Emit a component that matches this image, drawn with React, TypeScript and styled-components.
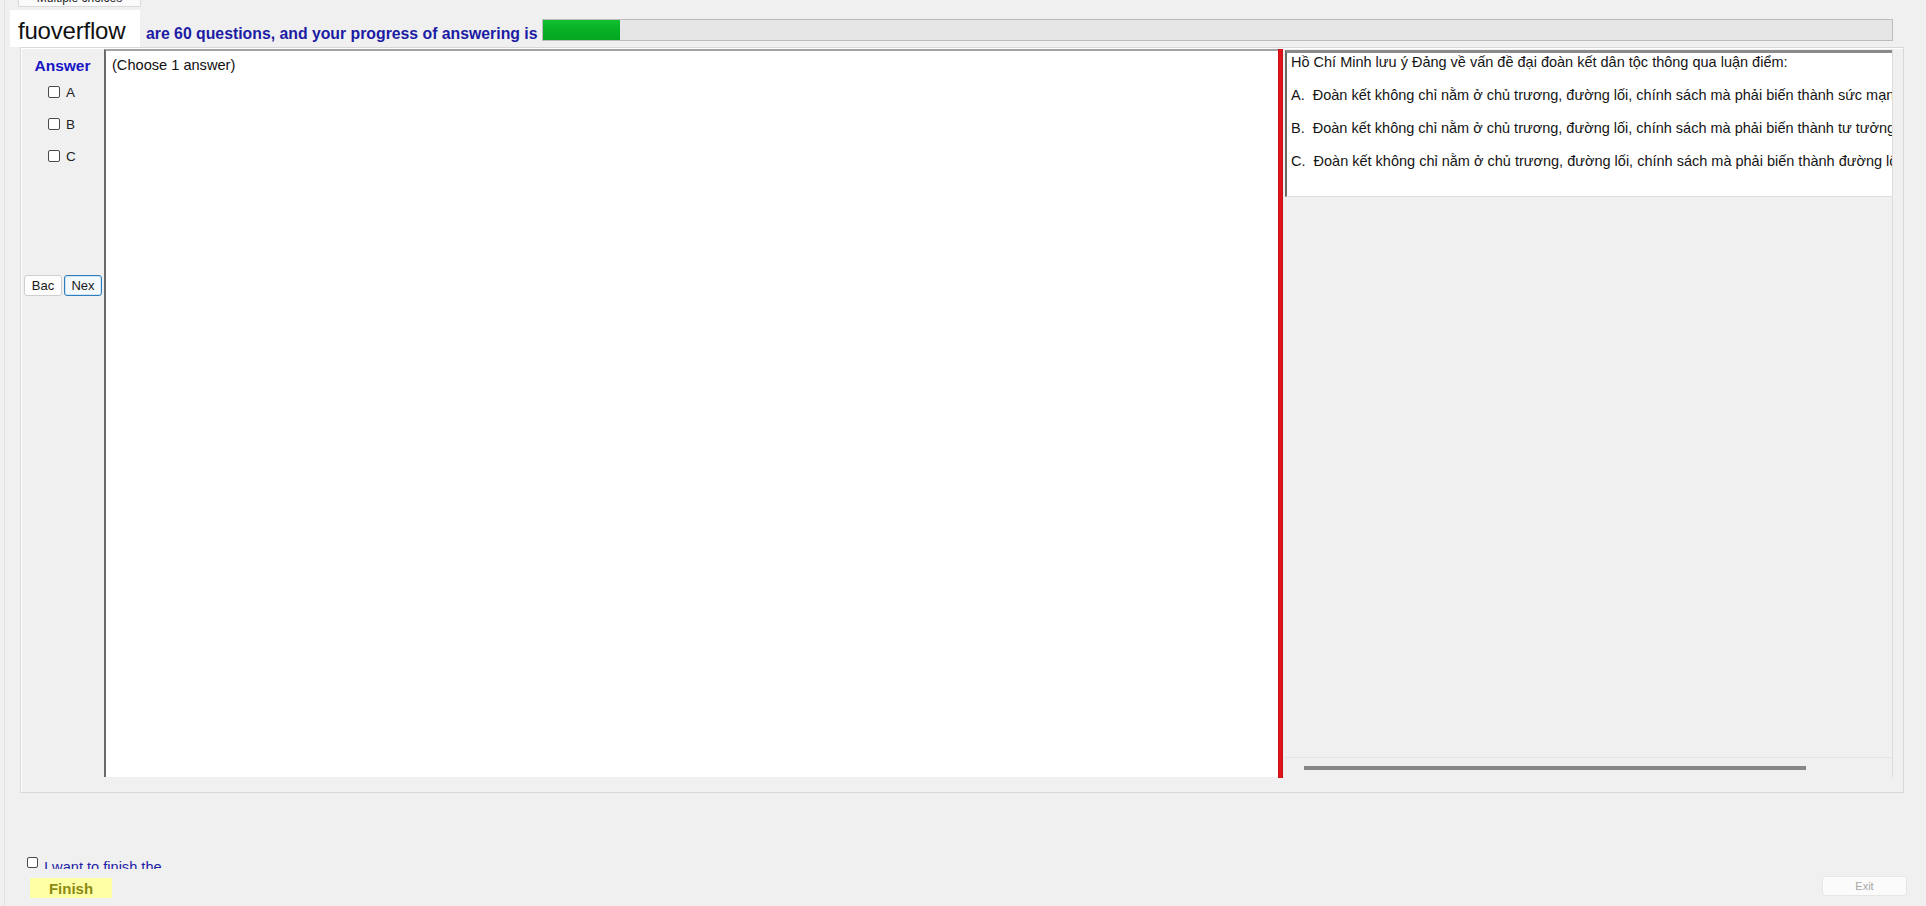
import React from 'react';
import styled, { createGlobalStyle } from 'styled-components';

const GlobalStyle = createGlobalStyle`
  html, body {
    margin: 0;
    padding: 0;
    background: #f0f0f0;
  }
  body {
    font-family: "Liberation Sans", Arial, sans-serif;
    color: #1e1e1e;
  }
`;

const Window = styled.div`
  width: 1926px;
  height: 906px;
  overflow: hidden;
  background: #f0f0f0;
  display: flex;
  flex-direction: column;
  box-shadow: inset 4px 0 0 #f0f0f0, inset 5px 0 0 #e2e2e2;
`;

const TabStrip = styled.div`
  height: 8px;
  display: flex;
`;

const Tab = styled.div`
  margin-left: 18px;
  width: 121px;
  height: 6px;
  overflow: hidden;
  background: #fbfbfb;
  border: 1px solid #dadada;
  border-top: none;
  font-size: 12px;
  line-height: 14px;
  text-align: center;
  color: #222;

  span {
    display: block;
    margin-top: -9px;
  }
`;

const Header = styled.div`
  height: 39px;
  display: flex;
  align-items: flex-start;
`;

const Brand = styled.div`
  margin: 2px 0 0 10px;
  width: 122px;
  height: 30px;
  padding: 7px 0 0 8px;
  background: #ffffff;
  font-size: 24px;
  line-height: 27px;
  color: #111;
  letter-spacing: -0.2px;
`;

const HeaderText = styled.div`
  margin: 17px 0 0 6px;
  font-size: 15.8px;
  line-height: 18px;
  font-weight: bold;
  color: #1c1ca4;
  white-space: nowrap;
`;

const Progress = styled.div`
  flex: 1;
  margin: 11px 33px 0 4px;
  height: 20px;
  background: #e6e6e6;
  border: 1px solid #bcbcbc;
  display: flex;
`;

const ProgressFill = styled.div`
  height: 100%;
  background: linear-gradient(#11c030, #06b025 50%, #05a722);
`;

const GroupBox = styled.div`
  margin-left: 20px;
  width: 1882px;
  height: 743px;
  border: 1px solid #d8d8d8;
  box-shadow: inset 1px 1px 0 #ffffff;
  display: flex;
  align-items: flex-start;
  padding-top: 1px;
  box-sizing: content-box;
`;

const AnswerColumn = styled.div`
  width: 83px;
  height: 728px;
  display: flex;
  flex-direction: column;
`;

const AnswerTitle = styled.div`
  margin-top: 8px;
  text-align: center;
  font-size: 15.5px;
  line-height: 18px;
  font-weight: bold;
  color: #1616c4;
`;

const OptionRow = styled.label<{ $first?: boolean }>`
  display: flex;
  align-items: center;
  height: 32px;
  margin-top: ${p => (p.$first ? '1px' : '0')};
  padding-left: 27px;
  font-size: 13.5px;
  color: #222;
`;

const CheckBox = styled.span<{ $size?: number }>`
  width: ${p => p.$size ?? 10}px;
  height: ${p => p.$size ?? 10}px;
  border: 1px solid #4a4a4a;
  border-radius: 2px;
  background: #ffffff;
  margin-right: 6px;
  flex: none;
`;

const NavRow = styled.div`
  margin-top: 103px;
  padding-left: 3px;
  display: flex;
  gap: 2px;
`;

const NavButton = styled.button<{ $focused?: boolean }>`
  width: 38px;
  height: 21px;
  padding: 0;
  font-family: "Liberation Sans", Arial, sans-serif;
  font-size: 13px;
  color: #1a1a1a;
  border-radius: 3px;
  border: 1px solid ${p => (p.$focused ? '#2f7fbe' : '#cfcfcf')};
  background: ${p => (p.$focused ? '#f4f9fd' : '#fdfdfd')};
  box-shadow: ${p => (p.$focused ? 'inset 0 0 0 1px #cfe3f3' : 'none')};
`;

const ChoiceBox = styled.div`
  width: 1174px;
  height: 728px;
  background: #ffffff;
  border-top: 2px solid #a3a3a3;
  border-left: 2px solid #6a6a6a;
  padding: 6px 0 0 6px;
  box-sizing: border-box;
  font-size: 14.6px;
  line-height: 17px;
  color: #111;
`;

const Divider = styled.div`
  width: 5px;
  height: 729px;
  background: linear-gradient(90deg, #b80f14, #e2141b 30%, #e2141b 70%, #b80f14);
`;

const QuestionPanel = styled.div`
  margin-left: 2px;
  width: 607px;
  height: 728px;
  border-right: 1px solid #dcdcdc;
  display: flex;
  flex-direction: column;
`;

const QuestionBox = styled.div`
  margin-top: 1px;
  height: 147px;
  background: #ffffff;
  border-top: 3px solid #8a8a8a;
  border-left: 2px solid #6a6a6a;
  border-bottom: 1px solid #dedede;
  box-sizing: border-box;
  padding: 1px 0 0 4px;
  overflow: hidden;
`;

const QuestionLine = styled.p`
  margin: 0 0 16px;
  font-size: 14.5px;
  line-height: 17px;
  color: #151515;
  white-space: pre;
`;

const PanelFill = styled.div`
  flex: 1;
  background: #f0f0f0;
`;

const ScrollStrip = styled.div`
  height: 19px;
  border-top: 1px solid #e4e4e4;
  display: flex;
  align-items: flex-start;
  padding-left: 19px;
`;

const ScrollThumb = styled.div`
  margin-top: 8px;
  width: 502px;
  height: 4px;
  background: #868686;
`;

const ConfirmRow = styled.label`
  margin: 64px 0 0 27px;
  height: 12px;
  overflow: hidden;
  display: flex;
  align-items: flex-start;
  font-size: 14.6px;
  line-height: 16px;
  color: #1c1ca4;
`;

const ConfirmText = styled.span`
  margin-top: 2px;
  width: 121px;
  overflow: hidden;
  white-space: nowrap;
`;

const ActionRow = styled.div`
  margin-top: 7px;
  display: flex;
  align-items: flex-start;
  justify-content: space-between;
  padding: 0 19px 0 30px;
`;

const FinishButton = styled.button`
  margin-top: 2px;
  width: 82px;
  height: 20px;
  padding: 0;
  border: none;
  background: #ffffa6;
  font-family: "Liberation Sans", Arial, sans-serif;
  font-size: 15px;
  font-weight: bold;
  color: #8a8a14;
`;

const ExitButton = styled.button`
  width: 85px;
  height: 20px;
  padding: 0;
  border: 1px solid #e6e6e6;
  border-radius: 3px;
  background: #fbfbfb;
  font-family: "Liberation Sans", Arial, sans-serif;
  font-size: 11px;
  color: #a6a6a6;
`;

const questionLines = [
  'Hồ Chí Minh lưu ý Đảng về vấn đề đại đoàn kết dân tộc thông qua luận điểm:',
  'A.  Đoàn kết không chỉ nằm ở chủ trương, đường lối, chính sách mà phải biến thành sức mạnh vật chất',
  'B.  Đoàn kết không chỉ nằm ở chủ trương, đường lối, chính sách mà phải biến thành tư tưởng của quần chúng',
  'C.  Đoàn kết không chỉ nằm ở chủ trương, đường lối, chính sách mà phải biến thành đường lối cách mạng',
];

const options = ['A', 'B', 'C'];

const App: React.FC = () => {
  const answered = 78;
  const total = 1353;

  return (
    <>
      <GlobalStyle />
      <Window>
        <TabStrip>
          <Tab><span>Multiple choices</span></Tab>
        </TabStrip>

        <Header>
          <Brand>fuoverflow</Brand>
          <HeaderText>are 60 questions, and your progress of answering is</HeaderText>
          <Progress>
            <ProgressFill style={{ width: `${(answered / total) * 100}%` }} />
          </Progress>
        </Header>

        <GroupBox>
          <AnswerColumn>
            <AnswerTitle>Answer</AnswerTitle>
            {options.map((o, i) => (
              <OptionRow key={o} $first={i === 0}>
                <CheckBox />
                {o}
              </OptionRow>
            ))}
            <NavRow>
              <NavButton>Bac</NavButton>
              <NavButton $focused>Nex</NavButton>
            </NavRow>
          </AnswerColumn>

          <ChoiceBox>(Choose 1 answer)</ChoiceBox>
          <Divider />

          <QuestionPanel>
            <QuestionBox>
              {questionLines.map(line => (
                <QuestionLine key={line}>{line}</QuestionLine>
              ))}
            </QuestionBox>
            <PanelFill />
            <ScrollStrip>
              <ScrollThumb />
            </ScrollStrip>
          </QuestionPanel>
        </GroupBox>

        <ConfirmRow>
          <CheckBox $size={9} />
          <ConfirmText>I want to finish the exam</ConfirmText>
        </ConfirmRow>

        <ActionRow>
          <FinishButton>Finish</FinishButton>
          <ExitButton>Exit</ExitButton>
        </ActionRow>
      </Window>
    </>
  );
};

export default App;
